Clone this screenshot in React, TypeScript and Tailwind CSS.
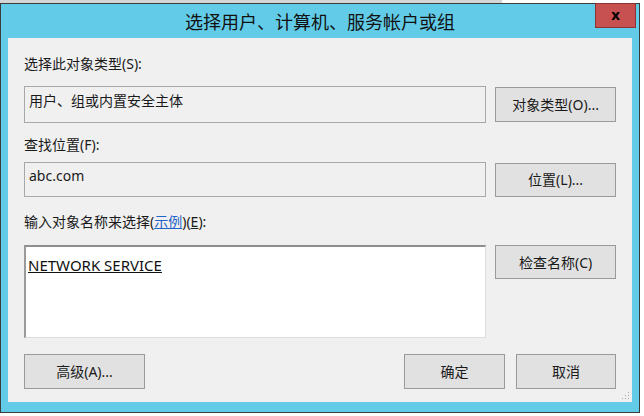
import React from 'react';

const font = { fontFamily: '"Noto Sans", "Noto Sans CJK SC", sans-serif' };

function Button({ label, className = '' }: { label: React.ReactNode; className?: string }) {
  return (
    <div
      className={`flex items-center justify-center bg-[#e1e1e1] border border-[#9a9a9a] text-[14px] text-[#1a1a1a] ${className}`}
    >
      {label}
    </div>
  );
}

export default function App() {
  return (
    <div className="w-[644px] h-[416px] bg-white flex flex-col overflow-hidden" style={font}>
      {/* strip above the window */}
      <div className="h-[3px] flex shrink-0">
        <div className="w-[502px] bg-[#d6d6d6]" />
        <div className="flex-1 bg-white" />
      </div>

      {/* window */}
      <div className="w-[640px] h-[410px] border border-[#3c3c3c] bg-[#62cbe8] flex flex-col shrink-0">
        {/* title bar */}
        <div className="relative h-[34px] flex items-center justify-center shrink-0">
          <span className="text-[18px] text-[#111] leading-none pt-[1px]">选择用户、计算机、服务帐户或组</span>
          <div className="absolute right-[3px] top-[-1px] w-[41px] h-[25px] bg-[#c75050] border border-[#8a3434] flex items-center justify-center">
            <span className="text-[15px] font-bold text-black leading-none pb-[2px]">x</span>
          </div>
        </div>

        {/* content panel */}
        <div className="relative mx-[7px] h-[364px] bg-[#f0f0f0] flex flex-col px-[16px] shrink-0">
          <div className="mt-[16px] h-[20px] leading-[20px] text-[14px] text-[#1a1a1a]">选择此对象类型(S):</div>
          <div className="mt-[12px] h-[37px] flex items-center gap-[9px]">
            <div className="w-[463px] h-[37px] border border-[#a8a8a8] bg-[#f0f0f0] px-[4px] pt-[4px] text-[14px] leading-[20px] text-[#1a1a1a]">
              用户、组或内置安全主体
            </div>
            <Button label="对象类型(O)..." className="w-[121px] h-[35px]" />
          </div>

          <div className="mt-[12px] h-[20px] leading-[20px] text-[14px] text-[#1a1a1a]">查找位置(F):</div>
          <div className="mt-[7px] h-[35px] flex items-center gap-[9px]">
            <div className="w-[463px] h-[35px] border border-[#a8a8a8] bg-[#f0f0f0] px-[4px] pt-[3px] text-[14px] leading-[20px] text-[#1a1a1a]">
              abc.com
            </div>
            <Button label="位置(L)..." className="w-[121px] h-[34px]" />
          </div>

          <div className="mt-[15px] h-[20px] leading-[20px] text-[14px] text-[#1a1a1a]">
            输入对象名称来选择(<span className="text-[#1e64c8] underline">示例</span>)(<span className="underline">E</span>):
          </div>
          <div className="mt-[13px] flex items-start gap-[9px]">
            <div className="w-[463px] h-[93px] bg-white border-t-2 border-l-2 border-t-[#8e8e8e] border-l-[#9a9a9a] border-r border-b border-r-[#dcdcdc] border-b-[#dcdcdc] px-[2px] pt-[6px]">
              <span className="text-[15px] leading-[20px] text-[#111] underline">NETWORK SERVICE</span>
            </div>
            <Button label="检查名称(C)" className="w-[121px] h-[34px]" />
          </div>

          <div className="mt-[16px] h-[35px] flex items-center">
            <Button label="高级(A)..." className="w-[121px] h-[35px]" />
            <div className="flex-1" />
            <Button label="确定" className="w-[101px] h-[35px]" />
            <Button label="取消" className="w-[100px] h-[35px] ml-[11px]" />
          </div>

          {/* resize grip */}
          <svg className="absolute right-[2px] bottom-[2px]" width="10" height="10" viewBox="0 0 10 10">
            <g fill="#a8a8a8">
              <rect x="8" y="2" width="1" height="1" />
              <rect x="5" y="5" width="1" height="1" />
              <rect x="8" y="5" width="1" height="1" />
              <rect x="2" y="8" width="1" height="1" />
              <rect x="5" y="8" width="1" height="1" />
              <rect x="8" y="8" width="1" height="1" />
            </g>
          </svg>
        </div>
      </div>
    </div>
  );
}
